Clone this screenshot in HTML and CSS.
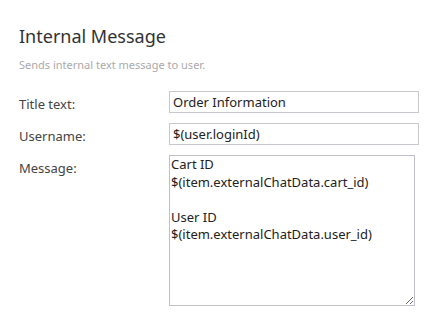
FILE: index.html
```
<!DOCTYPE html>
<html lang="en">
<head>
    <meta charset="UTF-8">
    <title>Internal Message</title>
    <link rel="stylesheet" href="styles.css">
</head>
<body>
    <div class="panel">
        <h1 class="panel-title">Internal Message</h1>
        <p class="panel-desc">Sends internal text message to user.</p>
        <div class="form">
            <label class="form-label" for="title">Title text:</label>
            <input class="form-input" id="title" type="text" value="Order Information">
            <label class="form-label" for="username">Username:</label>
            <input class="form-input" id="username" type="text" value="$(user.loginId)">
            <label class="form-label" for="message">Message:</label>
            <textarea class="form-textarea" id="message">Cart ID
$(item.externalChatData.cart_id)

User ID
$(item.externalChatData.user_id)</textarea>
        </div>
    </div>
</body>
</html>
```

FILE: styles.css
```
body {
    margin: 0;
    padding: 0;
    font-family: "Noto Sans", "Open Sans", sans-serif;
    background-color: #fff;
    color: #333;
}

.panel {
    padding: 24px 25px 0 19px;
}

.panel-title {
    margin: 0;
    font-size: 18px;
    font-weight: normal;
    color: #333;
}

.panel-desc {
    margin: 9px 0 0 0;
    font-size: 11px;
    color: #aaa;
}

.form {
    display: grid;
    grid-template-columns: 150px 250px;
    row-gap: 10px;
    margin-top: 19px;
}

.form-label {
    font-size: 13px;
    color: #444;
    padding-top: 4px;
}

.form-input {
    box-sizing: border-box;
    width: 250px;
    height: 22px;
    margin: 0;
    padding: 0 3px;
    border: 1px solid #c8c8d4;
    border-radius: 0;
    font-family: "Noto Sans", "Open Sans", sans-serif;
    font-size: 13px;
    color: #222;
    outline: none;
}

.form-textarea {
    box-sizing: border-box;
    width: 246px;
    height: 151px;
    margin: 0;
    padding: 0 1px;
    border: 1px solid #c0c0cc;
    border-radius: 0;
    font-family: "Noto Sans", "Open Sans", sans-serif;
    font-size: 13px;
    line-height: 17.5px;
    color: #222;
    outline: none;
}
```
